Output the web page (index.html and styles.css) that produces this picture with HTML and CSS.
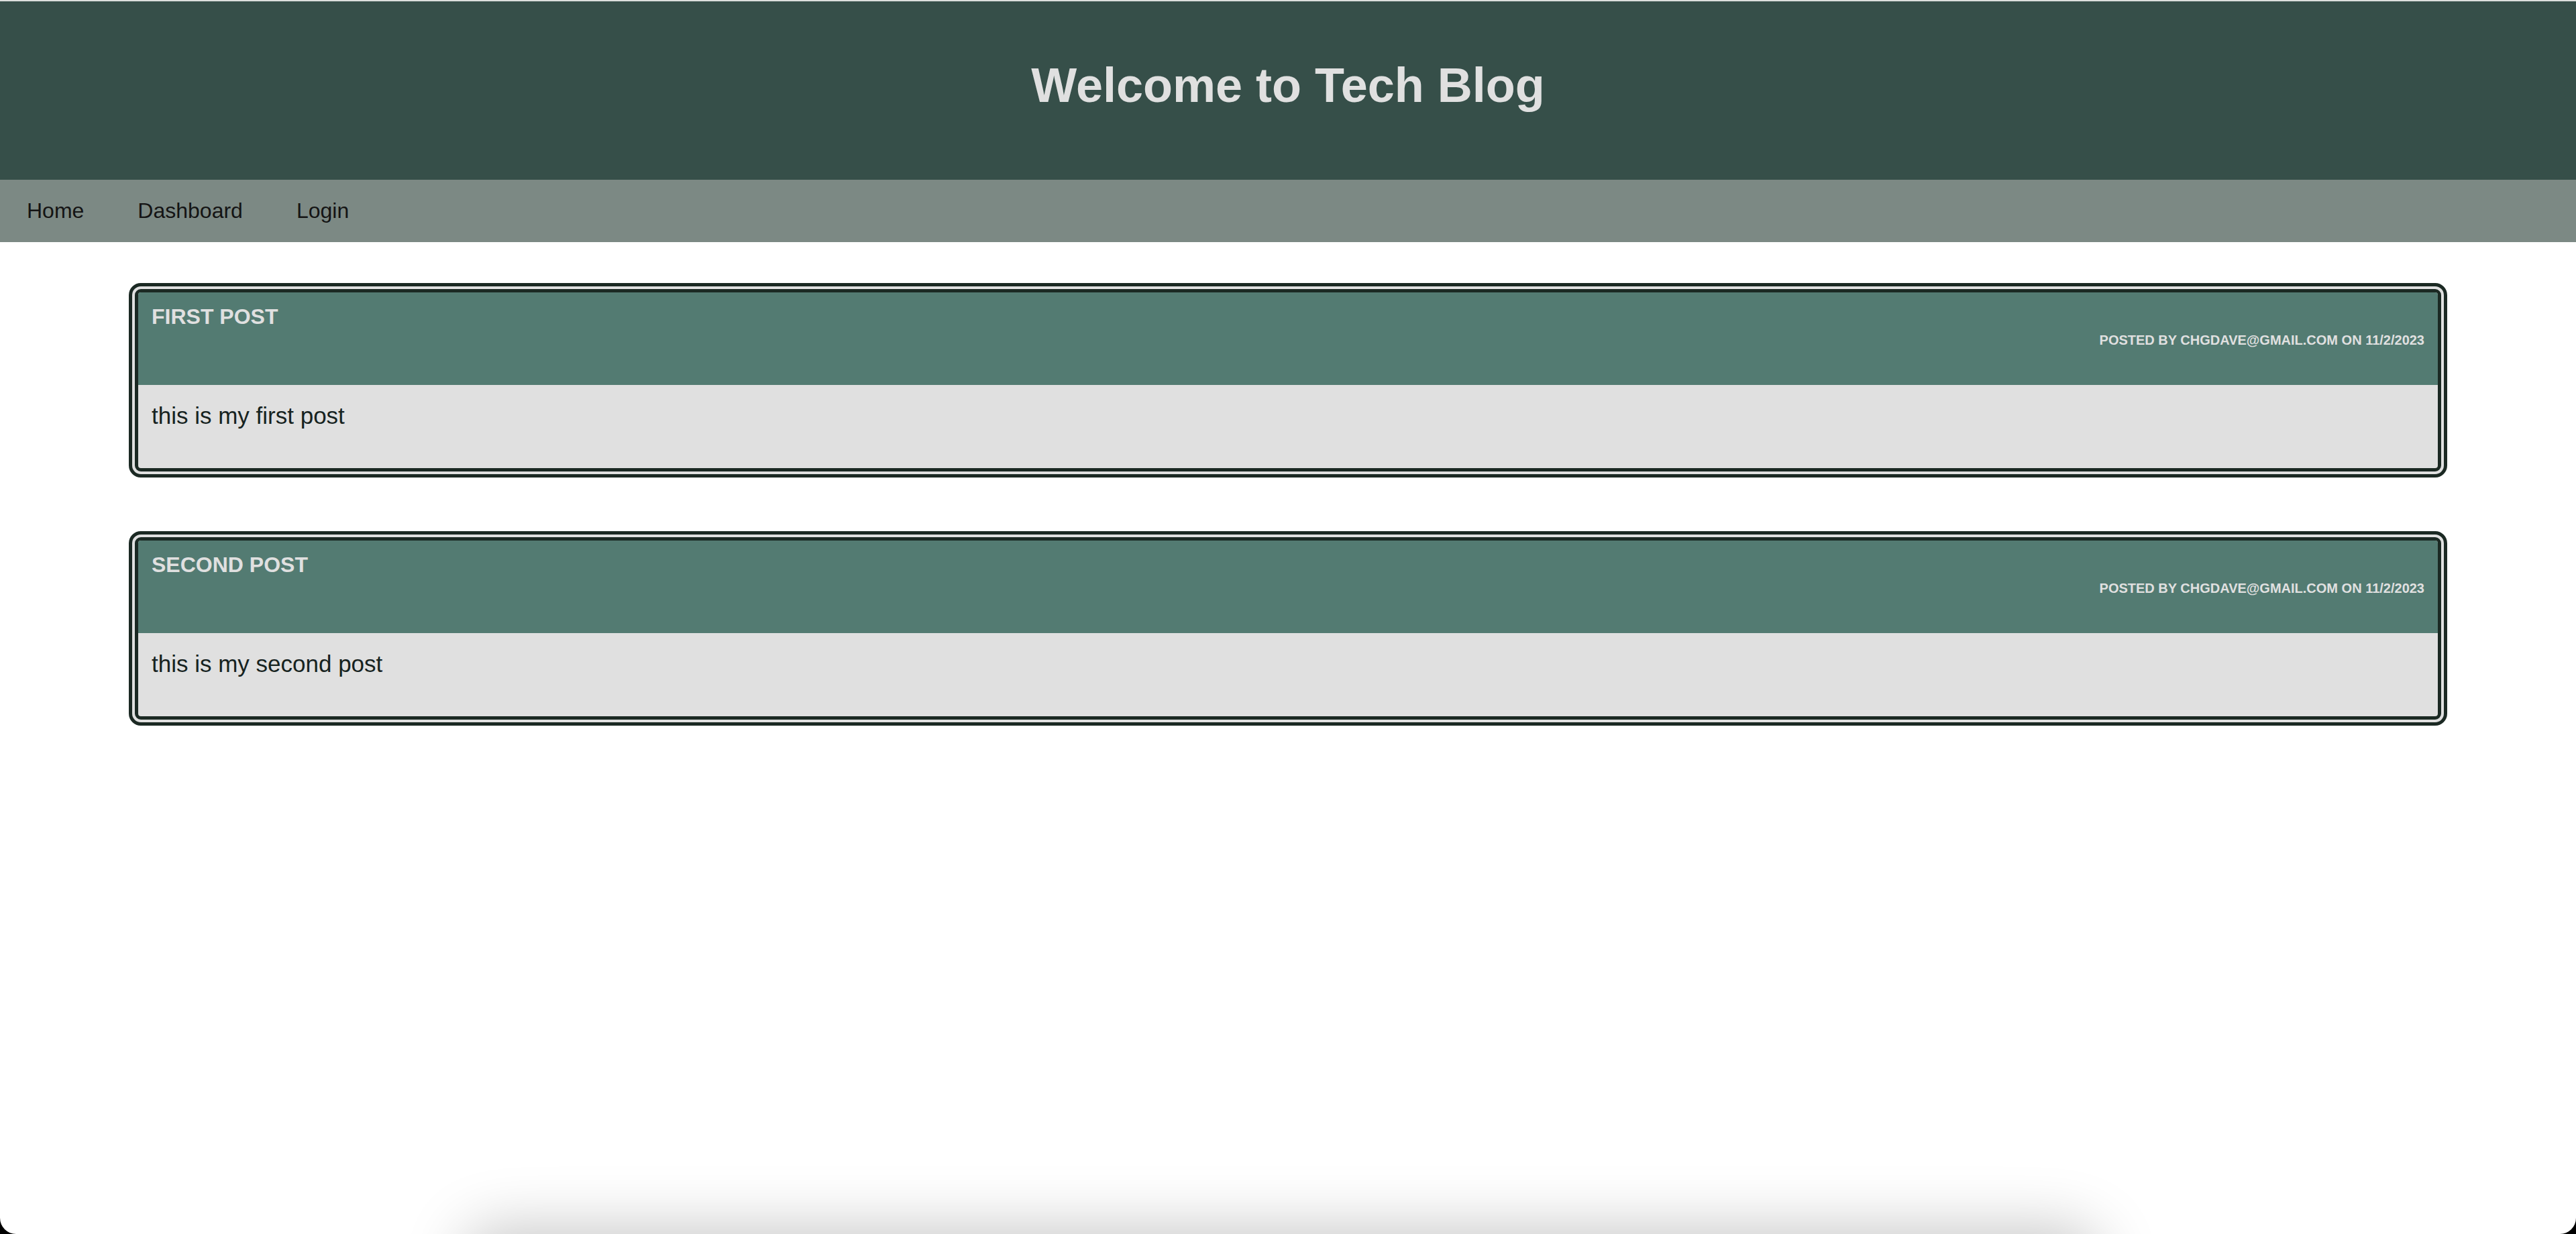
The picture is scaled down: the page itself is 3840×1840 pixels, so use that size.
FILE: index.html
```html
<!DOCTYPE html>
<html lang="en">
<head>
<meta charset="utf-8">
<title>Tech Blog</title>
<link rel="stylesheet" href="styles.css">
</head>
<body>
<div class="page">
  <header class="site-header">
    <h1 class="site-title">Welcome to Tech Blog</h1>
  </header>
  <nav class="site-nav">
    <a class="nav-link" href="#">Home</a>
    <a class="nav-link" href="#">Dashboard</a>
    <a class="nav-link" href="#">Login</a>
  </nav>
  <main class="posts">
    <article class="post">
      <div class="post-head">
        <h2 class="post-title">First Post</h2>
        <p class="post-meta">Posted by chgdave@gmail.com on 11/2/2023</p>
      </div>
      <div class="post-body">
        <p class="post-text">this is my first post</p>
      </div>
    </article>
    <article class="post">
      <div class="post-head">
        <h2 class="post-title">Second Post</h2>
        <p class="post-meta">Posted by chgdave@gmail.com on 11/2/2023</p>
      </div>
      <div class="post-body">
        <p class="post-text">this is my second post</p>
      </div>
    </article>
  </main>
  <div class="dock-shadow"></div>
</div>
</body>
</html>
```

FILE: styles.css
```css
html {
  background: #000;
}

body {
  margin: 0;
  font-family: "Liberation Sans", Arial, Helvetica, sans-serif;
}

.page {
  min-height: 1840px;
  box-sizing: border-box;
  background: #fff;
  border-top: 2px solid #dcdfdd;
  border-radius: 0 0 24px 24px;
  overflow: hidden;
}

.site-header {
  height: 266px;
  box-sizing: border-box;
  padding-top: 84px;
  background: #364f49;
  text-align: center;
}

.site-title {
  margin: 0;
  font-size: 72px;
  font-weight: bold;
  line-height: normal;
  color: #e0e0e0;
}

.site-nav {
  display: flex;
  background: #7c8984;
}

.nav-link {
  padding: 28px 40px;
  font-size: 32px;
  line-height: normal;
  color: #141414;
  text-decoration: none;
}

.posts {
  display: flex;
  flex-direction: column;
  gap: 80px;
  padding-top: 61px;
}

.post {
  width: 90%;
  margin: 0 auto;
  box-sizing: border-box;
  border: 14px double #1b2923;
  border-radius: 18px;
  background: #e0e0e0;
  overflow: hidden;
}

.post-head {
  height: 138px;
  box-sizing: border-box;
  padding: 18px 20px 0;
  background: #537b72;
  color: #e0e0e0;
}

.post-title {
  margin: 0;
  font-size: 32px;
  font-weight: bold;
  line-height: normal;
  text-transform: uppercase;
}

.post-meta {
  margin: 5px 0 0;
  font-size: 20px;
  font-weight: bold;
  line-height: normal;
  text-align: right;
  text-transform: uppercase;
}

.post-body {
  padding: 26px 20px 58px;
}

.post-text {
  margin: 0;
  font-size: 35px;
  line-height: normal;
  color: #17231f;
}

.dock-shadow {
  position: fixed;
  left: 700px;
  bottom: -100px;
  width: 2420px;
  height: 100px;
  border-radius: 40px;
  box-shadow: 0 0 90px 10px rgba(0, 0, 0, 0.22);
}
```
